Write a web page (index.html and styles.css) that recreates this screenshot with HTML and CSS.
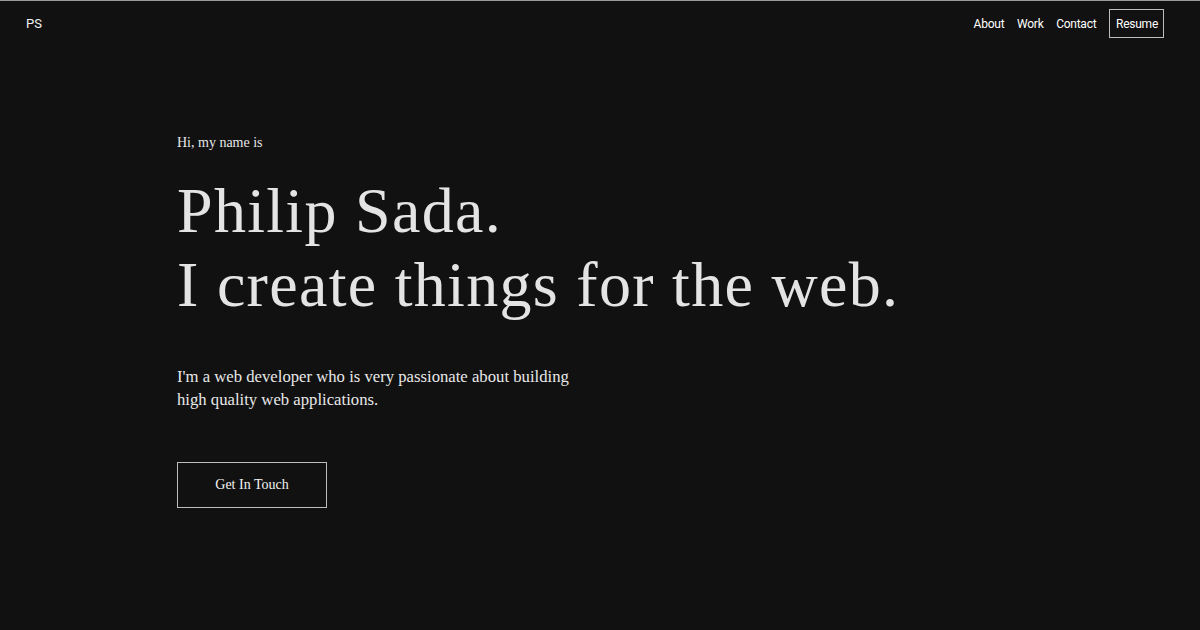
FILE: index.html
```html
<!DOCTYPE html>
<html lang="en">
<head>
<meta charset="utf-8">
<title>Philip Sada</title>
<link rel="stylesheet" href="styles.css">
</head>
<body>
<header class="topbar">
  <a class="logo" href="#">PS</a>
  <nav class="nav">
    <a class="nav-link" href="#about">About</a>
    <a class="nav-link" href="#work">Work</a>
    <a class="nav-link" href="#contact">Contact</a>
    <a class="nav-resume" href="#resume">Resume</a>
  </nav>
</header>
<main class="hero">
  <p class="hero-intro">Hi, my name is</p>
  <h1 class="hero-title">Philip Sada.<br>I create things for the web.</h1>
  <p class="hero-text">I'm a web developer who is very passionate about building<br>high quality web applications.</p>
  <a class="hero-button" href="#contact">Get In Touch</a>
</main>
</body>
</html>
```
FILE: styles.css
```css
html, body {
  margin: 0;
  padding: 0;
}
body {
  background: #111111;
  border-top: 1px solid #9a9a9a;
  height: 629px;
  color: #e6e6e6;
  font-family: "Liberation Serif", "Times New Roman", serif;
  overflow: hidden;
}
a { text-decoration: none; color: inherit; }

.topbar {
  display: flex;
  align-items: center;
  justify-content: space-between;
  height: 45px;
  padding: 0 36px 0 26px;
}
.logo {
  font-family: Roboto, "Liberation Sans", sans-serif;
  font-size: 13px;
  color: #f2f2f2;
}
.nav {
  display: flex;
  align-items: center;
  gap: 12.7px;
  font-family: Roboto, "Liberation Sans", sans-serif;
  font-size: 12px;
  letter-spacing: -0.25px;
  color: #ffffff;
}
.nav-link {
  padding-top: 1px;
}
.nav-resume {
  border: 1px solid #bdbdbd;
  padding: 7px 5px 6px 6px;
  line-height: 14px;
}

.hero {
  padding-left: 177px;
  padding-top: 88px;
}
.hero-intro {
  margin: 0;
  font-size: 14px;
  line-height: 18px;
}
.hero-title {
  margin: 22px 0 0;
  font-weight: 400;
  font-size: 64px;
  line-height: 74px;
  letter-spacing: 1.3px;
  color: #e4e4e4;
}
.hero-text {
  margin: 43px 0 0;
  font-size: 16.7px;
  line-height: 23px;
  color: #e8e8e8;
}
.hero-button {
  display: flex;
  align-items: center;
  justify-content: center;
  width: 148px;
  height: 44px;
  margin-top: 51px;
  border: 1px solid #bdbdbd;
  font-size: 14px;
  color: #f2f2f2;
}
```
